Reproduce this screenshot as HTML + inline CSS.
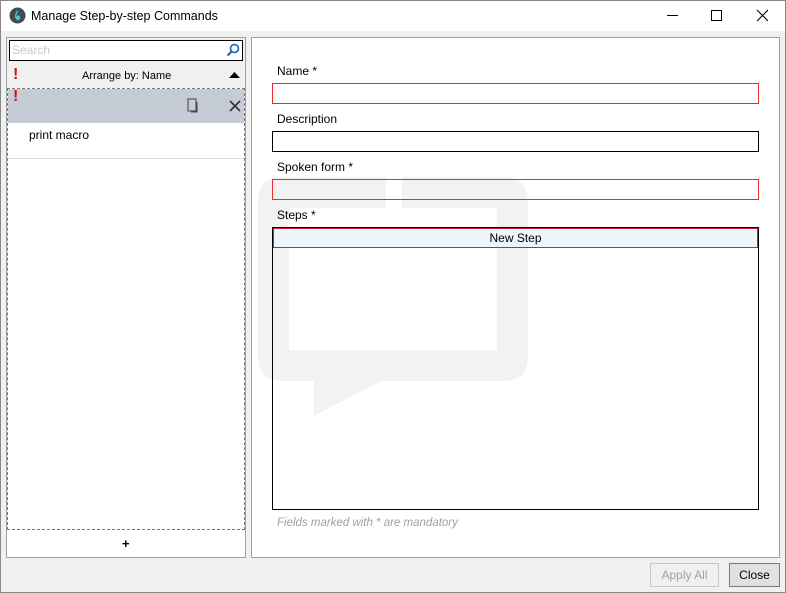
<!DOCTYPE html>
<html><head><style>
*{box-sizing:border-box;margin:0;padding:0}
body{width:786px;height:593px;position:relative;font-family:"Liberation Sans",sans-serif;font-size:12px;color:#000;background:#f0f0f0;overflow:hidden}
.win{position:absolute;left:0;top:0;width:786px;height:593px;border:1px solid #888;}
.tb{position:absolute;left:1px;top:1px;width:784px;height:30px;background:#fff}
.abs{position:absolute}
.lbl{position:absolute;font-size:12px;color:#000}
.inp{position:absolute;left:272px;width:487px;height:21px;border:1px solid #000;background:transparent}
.red{border-color:#f0282d}
</style></head><body>
<div class="win"></div>
<div class="tb">
 <svg class="abs" style="left:8px;top:6px" width="17" height="17"><circle cx="8.5" cy="8.5" r="8" fill="#3d4d55"/><path d="M9 3 C5 6 5 13 9 13 C12 13 12 9 9 8 C8 10 7 10 7.5 8 C8 6 9 5 9 3Z" fill="#3fd1c6"/></svg>
 <div class="abs" style="left:30px;top:8px;font-size:12.5px">Manage Step-by-step Commands</div>
 <div class="abs" style="left:666px;top:14px;width:11px;height:1px;background:#000"></div>
 <div class="abs" style="left:710px;top:9px;width:11px;height:11px;border:1px solid #000"></div>
 <svg class="abs" style="left:755px;top:8px" width="13" height="13"><path d="M1 1L12 12M12 1L1 12" stroke="#000" stroke-width="1.1"/></svg>
</div>
<!-- left panel -->
<div class="abs" style="left:6px;top:37px;width:240px;height:521px;border:1px solid #a0a0a0;background:#fff"></div>
<div class="abs" style="left:7px;top:38px;width:238px;height:26px;background:#f0f0f0"></div>
<div class="abs" style="left:9px;top:40px;width:234px;height:21px;border:1px solid #000;background:#fff"></div>
<div class="abs" style="left:12px;top:43px;color:#c8c8c8;font-size:12px">Search</div>
<svg class="abs" style="left:226px;top:43px" width="14" height="14"><circle cx="8.5" cy="5.5" r="4" fill="none" stroke="#1d5fb0" stroke-width="1.6"/><path d="M5.5 8.5L1.5 12.5" stroke="#1d5fb0" stroke-width="2"/></svg>
<div class="abs" style="left:7px;top:64px;width:238px;height:24px;background:#f0f0f0"></div>
<div class="abs" style="left:13px;top:66px;color:#d01010;font-weight:bold;font-size:16px">!</div>
<div class="abs" style="left:82px;top:70px;font-size:11px">Arrange by: Name</div>
<svg class="abs" style="left:229px;top:72px" width="11" height="6"><path d="M0 6L5.5 0L11 6Z" fill="#000"/></svg>
<div class="abs" style="left:7px;top:88px;width:238px;height:442px;border:1px dashed #777"></div>
<div class="abs" style="left:8px;top:89px;width:236px;height:34px;background:#c5ccd6"></div>
<div class="abs" style="left:13px;top:88px;color:#d01010;font-weight:bold;font-size:16px">!</div>
<svg class="abs" style="left:187px;top:98px" width="14" height="16"><rect x="1" y="1" width="8" height="12" fill="none" stroke="#444"/><path d="M10 4V14H4" fill="none" stroke="#444"/></svg>
<svg class="abs" style="left:229px;top:100px" width="12" height="12"><path d="M1 1L11 11M11 1L1 11" stroke="#333" stroke-width="1.6"/></svg>
<div class="abs" style="left:29px;top:128px;font-size:12px">print macro</div>
<div class="abs" style="left:8px;top:158px;width:236px;height:1px;background:#ddd"></div>
<div class="abs" style="left:122px;top:536px;font-size:13px;font-weight:bold">+</div>
<!-- right panel -->
<div class="abs" style="left:251px;top:37px;width:529px;height:521px;border:1px solid #a0a0a0;background:#fff"></div>
<svg class="abs" style="left:252px;top:38px" width="527" height="519">
 <path fill="#f2f2f2" fill-rule="evenodd" d="M31 139 H134 V170 H37 V312 H245 V170 H150 V139 H251 Q276 139 276 164 V318 Q276 343 251 343 H129 L62 378 V343 H31 Q6 343 6 318 V164 Q6 139 31 139Z"/>
</svg>
<div class="lbl" style="left:277px;top:64px">Name *</div>
<div class="inp red" style="top:83px"></div>
<div class="lbl" style="left:277px;top:112px">Description</div>
<div class="inp" style="top:131px"></div>
<div class="lbl" style="left:277px;top:160px">Spoken form *</div>
<div class="inp red" style="top:179px"></div>
<div class="lbl" style="left:277px;top:208px">Steps *</div>
<div class="abs" style="left:272px;top:227px;width:487px;height:283px;border:1px solid #000"></div>
<div class="abs" style="left:273px;top:228px;width:485px;height:20px;border:1px solid #d0203a;background:#eef5fc;text-align:center;line-height:18px">New Step</div>
<div class="abs" style="left:277px;top:517px;color:#a0a0a0;font-style:italic;font-size:11.5px">Fields marked with * are mandatory</div>
<!-- buttons -->
<div class="abs" style="left:650px;top:563px;width:69px;height:24px;border:1px solid #c8c8c8;background:#f0f0f0;color:#a0a0a0;text-align:center;line-height:22px">Apply All</div>
<div class="abs" style="left:729px;top:563px;width:51px;height:24px;border:1px solid #7a7a7a;background:#e1e1e1;text-align:center;line-height:22px">Close</div>
</body></html>
